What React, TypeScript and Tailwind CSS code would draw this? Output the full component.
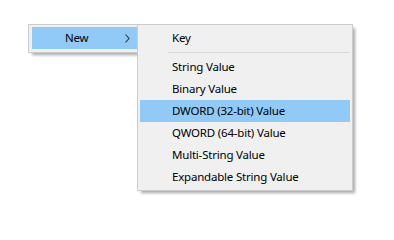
import React from "react"

const items = [
  "String Value",
  "Binary Value",
  "DWORD (32-bit) Value",
  "QWORD (64-bit) Value",
  "Multi-String Value",
  "Expandable String Value",
]

function MenuItem({ label, active }: { label: string; active?: boolean }) {
  return (
    <div className={`h-[22px] flex items-center pl-[32px] pr-4 ${active ? "bg-[#91c9f7]" : ""}`}>
      <span className="leading-none">{label}</span>
    </div>
  )
}

export default function App() {
  return (
    <div className="relative w-[394px] h-[217px] bg-white overflow-hidden text-[11.5px] tracking-[-0.2px] text-black font-['Noto_Sans',sans-serif]">
      {/* parent menu */}
      <div className="absolute left-[28px] top-[24px] w-[114px] border border-[#cccccc] bg-[#f0f0f0] p-[3px] pt-[2px] shadow-[3px_3px_3px_-1px_rgba(0,0,0,0.35)]">
        <div className="h-[22px] flex items-center bg-[#91c9f7] pl-[33px] pr-[6px]">
          <span className="flex-1 leading-none">New</span>
          <svg width="5" height="9" viewBox="0 0 5 9" className="mr-[2px]">
            <polyline points="0.5,0.5 4,4.5 0.5,8.5" fill="none" stroke="#333" strokeWidth="1.1" />
          </svg>
        </div>
      </div>

      {/* submenu */}
      <div className="absolute left-[137px] top-[24px] w-[216px] border border-[#cccccc] bg-[#f0f0f0] px-[2px] py-[2px] shadow-[3px_3px_3px_-1px_rgba(0,0,0,0.35)]">
        <MenuItem label="Key" />
        <div className="h-[7px] flex items-center pl-[28px]">
          <div className="h-px flex-1 bg-[#d7d7d7]" />
        </div>
        {items.map((label) => (
          <MenuItem key={label} label={label} active={label === "DWORD (32-bit) Value"} />
        ))}
      </div>
    </div>
  )
}
